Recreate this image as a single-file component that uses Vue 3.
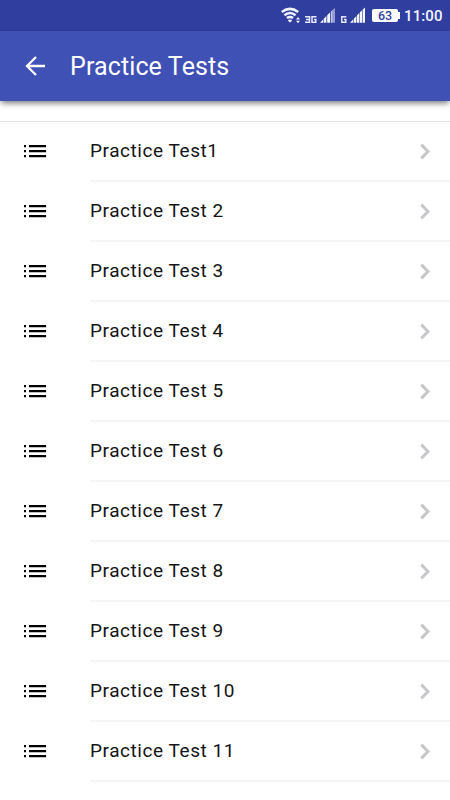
<script setup>
const tests = Array.from({ length: 11 }, (_, i) => (i === 0 ? 'Practice Test1' : `Practice Test ${i + 1}`))
</script>

<template>
  <div class="screen">
    <div class="status">
      <svg class="signals" width="98" height="31" viewBox="0 0 98 31">
        <g fill="none" stroke="#eef0ff" stroke-width="2.5">
          <path d="M1.8 12Q10 5.8 18.2 12" />
          <path d="M4.4 15.2Q10 10.8 15.6 15.2" />
          <path d="M6.9 18.1Q10 15.8 13.1 18.1" />
        </g>
        <path d="M7.8 20.2Q10 18.8 12.2 20.2L10 22.8Z" fill="#eef0ff" />
        <path d="M16 19.4l2-2.4 2 2.4zM16 20.8l2 2.4 2-2.4z" fill="#eef0ff" />
        <g fill="none" stroke="#e4e7fb" stroke-width="1.5">
          <path d="M25 16.7H29.5V22.3H25M26 19.5H29.3" />
          <path d="M36.5 16.7H32V22.3H35.8V19.6H34" />
          <path d="M66.3 16.7H61.8V22.3H65.8V19.6H64" />
        </g>
        <g fill="#f4f5ff">
          <path d="M40 22.8L43.2 19.5V22.8zM43.8 18.8L46.4 16V22.8H43.8zM47.2 15.3L50 12.4V22.8H47.2z" />
          <path d="M50.8 11.8L52.6 10V22.8H50.8z" opacity=".75" />
          <path d="M52.6 10L55 7.8V22.8H52.6z" opacity=".5" />
          <path d="M70 22.8L73.2 19.5V22.8zM73.8 18.8L76.4 16V22.8H73.8zM77 15.3L79.3 13V22.8H77zM79.9 12.2L82.2 10.2V22.8H79.9zM82.8 9.6L85 7.6V22.8H82.8z" />
        </g>
      </svg>
      <div class="battery">63</div>
      <div class="clock">11:00</div>
    </div>
    <header class="bar">
      <svg class="back" width="22" height="22" viewBox="0 0 22 22">
        <path d="M20 11H2.5M11 2L2 11L11 20" fill="none" stroke="#fff" stroke-width="2.3" />
      </svg>
      <h1>Practice Tests</h1>
    </header>
    <ul class="list">
      <li v-for="t in tests" :key="t" class="row">
        <svg class="menu" width="23" height="14" viewBox="0 0 23 14">
          <path d="M0 1h2v2.2H0zM0 6h2v2.2H0zM0 11h2v2.2H0zM5 1h17.1v2.2H5zM5 6h17.1v2.2H5zM5 11h17.1v2.2H5z" fill="#000" />
        </svg>
        <div class="body">
          <span class="name">{{ t }}</span>
          <svg class="chevron" width="12" height="18" viewBox="0 0 12 18">
            <path d="M1.3 2.6L7.9 9.5L1.3 16.4" fill="none" stroke="#c7c7cc" stroke-width="3" />
          </svg>
        </div>
      </li>
    </ul>
  </div>
</template>

<style>
body { margin: 0; background: #fff; }
</style>

<style scoped>
.screen { width: 450px; height: 800px; overflow: hidden; background: #fff; font-family: Roboto, "Liberation Sans", sans-serif; }
.status { display: flex; align-items: center; height: 31px; padding-left: 280px; background: #303f9f; color: #f4f5ff; }
.signals { flex: none; margin-right: -6px; }
.battery { position: relative; width: 26px; height: 13px; line-height: 14px; border-radius: 2px; background: #fff; color: #303f9f; font-size: 12.5px; font-weight: 500; text-align: center; }
.battery::after { content: ""; position: absolute; right: -2px; top: 3px; width: 2px; height: 7px; background: #fff; }
.clock { margin-left: 6px; font-size: 15px; font-weight: 500; letter-spacing: 0.1px; line-height: 31px; padding-top: 1px; }
.bar { display: flex; align-items: center; height: 70px; box-sizing: border-box; padding-left: 25px; background: #3f51b5; box-shadow: 0 3px 6px -1px rgba(0, 0, 0, 0.55); }
.back { flex: none; margin-right: 23px; }
h1 { margin: 0; padding-top: 2px; color: #fff; font-size: 25px; line-height: 30px; font-weight: 400; letter-spacing: 0.12px; }
.list { margin: 20px 0 0; padding: 0; list-style: none; border-top: 1px solid #e5e5e5; }
.row { display: flex; height: 60px; }
.menu { flex: none; margin: 22px 43px 0 24px; }
.body { display: flex; flex: 1; align-items: center; justify-content: space-between; box-sizing: border-box; height: 60px; padding-right: 18px; border-bottom: 2px solid #f5f5f5; color: #151515; font-size: 19px; letter-spacing: 0.56px; }
.name { padding-bottom: 2px; }
</style>
